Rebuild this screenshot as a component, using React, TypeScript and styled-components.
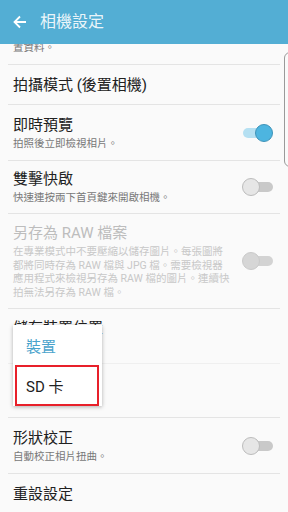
import React from 'react'
import styled, { createGlobalStyle } from 'styled-components'

const GlobalStyle = createGlobalStyle`
  html, body {
    margin: 0;
    padding: 0;
    background: #fafafa;
  }
  * {
    box-sizing: border-box;
  }
`

const Page = styled.div`
  position: relative;
  width: 288px;
  height: 512px;
  overflow: hidden;
  background: #fafafa;
  font-family: Roboto, 'Noto Sans CJK TC', sans-serif;
`

const Header = styled.div`
  height: 44px;
  background: #53aed4;
  display: flex;
  align-items: center;
  padding-left: 13px;
`

const Title = styled.div`
  margin-left: 13px;
  font-size: 16px;
  color: rgba(255, 255, 255, 0.9);
  line-height: 20px;
`

const List = styled.div`
  display: flex;
  flex-direction: column;
`

const Row = styled.div<{ $h: number; $light?: boolean }>`
  height: ${(p) => p.$h}px;
  margin: 0 8px;
  padding: 0 6px 0 5px;
  border-bottom: 1px solid ${(p) => (p.$light ? '#efefef' : '#e4e4e4')};
  display: flex;
  align-items: center;
  justify-content: space-between;
  overflow: hidden;
`

const PartialRow = styled(Row)`
  align-items: flex-end;
  padding-bottom: 10px;
`

const TextBlock = styled.div`
  display: flex;
  flex-direction: column;
`

const Name = styled.div<{ $off?: boolean }>`
  font-size: 15px;
  line-height: 20px;
  color: ${(p) => (p.$off ? '#bdbdbd' : '#212121')};
`

const Sub = styled.div<{ $off?: boolean }>`
  margin-top: 2px;
  font-size: 10.5px;
  line-height: 13.5px;
  color: ${(p) => (p.$off ? '#c8c8c8' : '#787878')};
`

const Switch = styled.div`
  position: relative;
  flex: none;
  width: 32px;
  height: 18px;
`

const Track = styled.div<{ $on: boolean; $off?: boolean }>`
  position: absolute;
  top: 4px;
  height: 10px;
  border-radius: 5px;
  left: ${(p) => (p.$on ? '1px' : '8px')};
  width: 23px;
  background: ${(p) => (p.$on ? '#b5e0f2' : p.$off ? '#d3d3d3' : '#c9c9c9')};
`

const Knob = styled.div<{ $on: boolean; $off?: boolean }>`
  position: absolute;
  top: 0;
  left: ${(p) => (p.$on ? '13px' : '0')};
  width: 18px;
  height: 18px;
  border-radius: 50%;
  background: ${(p) => (p.$on ? '#4db5e0' : p.$off ? '#d6d6d6' : '#e6e6e6')};
  border: 1px solid ${(p) => (p.$on ? '#3f93b8' : p.$off ? '#cacaca' : '#bcbcbc')};
`

const ScrollHint = styled.div`
  position: absolute;
  left: 284px;
  top: 52px;
  width: 12px;
  height: 115px;
  border: 1px solid #9a9a9a;
  border-radius: 6px;
`

const Popup = styled.div`
  position: absolute;
  left: 13px;
  top: 325px;
  width: 89px;
  height: 81px;
  background: #ffffff;
  box-shadow: 0 1px 4px rgba(0, 0, 0, 0.3);
  display: flex;
  flex-direction: column;
`

const Option = styled.div<{ $active?: boolean; $marked?: boolean }>`
  height: ${(p) => (p.$marked ? 41 : 40)}px;
  display: flex;
  align-items: center;
  font-size: 15px;
  color: ${(p) => (p.$active ? '#4aa3cc' : '#212121')};
  padding-left: ${(p) => (p.$marked ? 9 : 13)}px;
  margin: ${(p) => (p.$marked ? '0 3px 0 2px' : '0')};
  border: ${(p) => (p.$marked ? '2px solid #e8202a' : 'none')};
`

const Toggle = ({ on, off }: { on: boolean; off?: boolean }) => (
  <Switch>
    <Track $on={on} $off={off} />
    <Knob $on={on} $off={off} />
  </Switch>
)

const BackArrow = () => (
  <svg width="14" height="14" viewBox="0 0 14 14" fill="none">
    <path d="M13 7H1.5M7 1.5L1.5 7L7 12.5" stroke="#fff" strokeWidth="1.8" />
  </svg>
)

export default function App() {
  return (
    <Page>
      <GlobalStyle />
      <Header>
        <BackArrow />
        <Title>相機設定</Title>
      </Header>
      <List>
        <PartialRow $h={21}>
          <Sub>置資料。</Sub>
        </PartialRow>
        <Row $h={40}>
          <Name>拍攝模式 (後置相機)</Name>
        </Row>
        <Row $h={56}>
          <TextBlock>
            <Name>即時預覽</Name>
            <Sub>拍照後立即檢視相片。</Sub>
          </TextBlock>
          <Toggle on />
        </Row>
        <Row $h={53}>
          <TextBlock>
            <Name>雙擊快啟</Name>
            <Sub>快速連按兩下首頁鍵來開啟相機。</Sub>
          </TextBlock>
          <Toggle on={false} />
        </Row>
        <Row $h={95}>
          <TextBlock>
            <Name $off>另存為 RAW 檔案</Name>
            <Sub $off>
              在專業模式中不要壓縮以儲存圖片。每張圖將
              <br />
              都將同時存為 RAW 檔與 JPG 檔。需要檢視器
              <br />
              應用程式來檢視另存為 RAW 檔的圖片。連續快
              <br />
              拍無法另存為 RAW 檔。
            </Sub>
          </TextBlock>
          <Toggle on={false} off />
        </Row>
        <Row $h={55} $light>
          <TextBlock>
            <Name>儲存裝置位置</Name>
            <Sub>SD 卡</Sub>
          </TextBlock>
        </Row>
        <Row $h={54} />
        <Row $h={56}>
          <TextBlock>
            <Name>形狀校正</Name>
            <Sub>自動校正相片扭曲。</Sub>
          </TextBlock>
          <Toggle on={false} />
        </Row>
        <Row $h={40}>
          <Name>重設設定</Name>
        </Row>
      </List>
      <ScrollHint />
      <Popup>
        <Option $active>裝置</Option>
        <Option $marked>SD 卡</Option>
      </Popup>
    </Page>
  )
}
